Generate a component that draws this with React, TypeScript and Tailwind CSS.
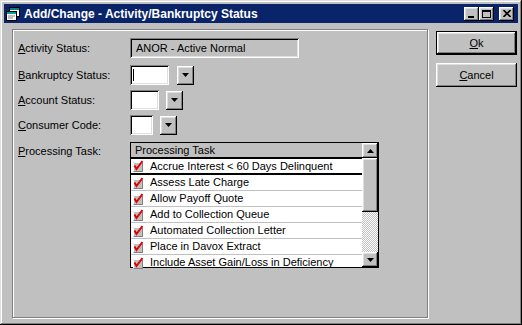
import React from 'react';

// Win95 bevels
const raised =
  'shadow-[inset_-1px_-1px_#000,inset_1px_1px_#fff,inset_-2px_-2px_#808080,inset_2px_2px_#dfdfdf]';
const sunken =
  'shadow-[inset_1px_1px_#808080,inset_-1px_-1px_#fff,inset_2px_2px_#000,inset_-2px_-2px_#dfdfdf]';

const tasks = [
  'Accrue Interest < 60 Days Delinquent',
  'Assess Late Charge',
  'Allow Payoff Quote',
  'Add to Collection Queue',
  'Automated Collection Letter',
  'Place in Davox Extract',
  'Include Asset Gain/Loss in Deficiency',
];

function Arrow({ up = false }: { up?: boolean }) {
  return (
    <svg width="7" height="4" viewBox="0 0 7 4">
      {up ? <path d="M3.5 0 L7 4 L0 4 Z" fill="#000" /> : <path d="M0 0 L7 0 L3.5 4 Z" fill="#000" />}
    </svg>
  );
}

function Check() {
  return (
    <svg width="12" height="12" viewBox="0 0 12 12" className="shrink-0">
      <rect x="1.5" y="2.5" width="9" height="9" fill="#c0c0c0" stroke="#808080" />
      <path d="M1.5 2.5h9M1.5 2.5v9" stroke="#fff" />
      <path d="M2.5 5.5 L4.5 9 L10.5 1" fill="none" stroke="#e00000" strokeWidth="2" />
    </svg>
  );
}

function Combo({ box, gap, caret }: { box: string; gap: string; caret?: boolean }) {
  return (
    <div className="flex items-center">
      <div className={`${box} h-[20px] bg-white ${sunken} flex items-center pl-[3px]`}>
        {caret && <div className="w-px h-[12px] bg-black" />}
      </div>
      <div className={`${gap} w-[17px] h-[19px] bg-[#c0c0c0] ${raised} flex items-center justify-center`}>
        <Arrow />
      </div>
    </div>
  );
}

function Label({ k, rest }: { k: string; rest: string }) {
  return (
    <div className="w-[112px] shrink-0">
      <span className="underline">{k}</span>
      {rest}
    </div>
  );
}

export default function App() {
  return (
    <div className="w-[522px] h-[325px] bg-[#c0c0c0] shadow-[inset_-1px_-1px_#000,inset_1px_1px_#dfdfdf,inset_-2px_-2px_#808080,inset_2px_2px_#fff] flex flex-col font-['Liberation_Sans',Arial,sans-serif] text-[11px] text-black leading-none">
      {/* Заголовок окна */}
      <div className="mt-[4px] mx-[4px] h-[19px] bg-[#0a246a] flex items-center pl-[1px] pr-[4px]">
        <svg width="16" height="16" viewBox="0 0 16 16" className="shrink-0">
          <rect x="4.5" y="1.5" width="10" height="9" fill="#fff" stroke="#000" />
          <rect x="5" y="2" width="9" height="2" fill="#008080" />
          <rect x="1.5" y="5.5" width="10" height="9" fill="#fff" stroke="#000" />
          <rect x="2" y="6" width="9" height="2" fill="#00a0a0" />
          <path d="M3 10h7M3 12h5" stroke="#808080" />
        </svg>
        <div className="ml-[3px] text-white font-bold text-[12px]">
          Add/Change - Activity/Bankruptcy Status
        </div>
        <div className="ml-auto flex items-center">
          <div className={`w-[15px] h-[14px] bg-[#c0c0c0] ${raised} flex items-end justify-center pb-[3px] pr-[2px]`}>
            <div className="w-[6px] h-[2px] bg-black" />
          </div>
          <div className={`w-[15px] h-[14px] bg-[#c0c0c0] ${raised} flex items-center justify-center`}>
            <div className="w-[9px] h-[8px] border border-black border-t-2" />
          </div>
          <div className={`ml-[5px] w-[15px] h-[14px] bg-[#c0c0c0] ${raised} flex items-center justify-center`}>
            <svg width="8" height="7" viewBox="0 0 8 7">
              <path d="M0.5 0 L7.5 7 M7.5 0 L0.5 7" stroke="#000" strokeWidth="1.6" />
            </svg>
          </div>
        </div>
      </div>

      {/* Тело */}
      <div className="flex mt-[6px]">
        <div className="ml-[12px] w-[416px] h-[289px] border border-[#808080] shadow-[1px_1px_#fff,inset_1px_1px_#fff] pl-[5px] pt-[8px]">
          <div className="flex items-center h-[20px]">
            <Label k="A" rest="ctivity Status:" />
            <div className={`w-[169px] h-[20px] ${sunken} bg-[#c0c0c0] flex items-center pl-[6px]`}>
              ANOR - Active Normal
            </div>
          </div>
          <div className="flex items-center h-[20px] mt-[7px]">
            <Label k="B" rest="ankruptcy Status:" />
            <Combo box="w-[39px]" gap="ml-[8px]" caret />
          </div>
          <div className="flex items-center h-[20px] mt-[5px]">
            <Label k="A" rest="ccount Status:" />
            <Combo box="w-[29px]" gap="ml-[7px]" />
          </div>
          <div className="flex items-center h-[20px] mt-[5px]">
            <Label k="C" rest="onsumer Code:" />
            <Combo box="w-[23px]" gap="ml-[7px]" />
          </div>
          <div className="flex mt-[7px]">
            <div className="pt-[4px]">
              <Label k="P" rest="rocessing Task:" />
            </div>
            {/* Список задач */}
            <div className="w-[249px] h-[126px] border border-black flex bg-white">
              <div className="flex-1 flex flex-col">
                <div className="h-[16px] shrink-0 bg-[#c0c0c0] flex items-center pl-[4px] border-b-2 border-black">
                  Processing Task
                </div>
                {tasks.map((t, i) => (
                  <div
                    key={t}
                    className={`h-[16px] shrink-0 flex items-center pl-[1px] border-b ${
                      i === 0 ? 'border-b-2 border-black h-[15px]' : 'border-[#c0c0c0]'
                    }`}
                  >
                    <Check />
                    <span className="ml-[6px] whitespace-nowrap">{t}</span>
                  </div>
                ))}
              </div>
              <div className="w-[16px] flex flex-col">
                <div className={`h-[15px] bg-[#c0c0c0] ${raised} flex items-center justify-center`}>
                  <Arrow up />
                </div>
                <div className={`h-[54px] bg-[#c0c0c0] ${raised}`} />
                <div className="flex-1 bg-[image:repeating-conic-gradient(#c0c0c0_0%_25%,#ffffff_0%_50%)] bg-[length:2px_2px]" />
                <div className={`h-[15px] bg-[#c0c0c0] ${raised} flex items-center justify-center`}>
                  <Arrow />
                </div>
              </div>
            </div>
          </div>
        </div>

        {/* Кнопки */}
        <div className="ml-[8px] mt-[2px] flex flex-col gap-[8px]">
          <div className="w-[81px] h-[24px] border border-black">
            <div className={`w-full h-full ${raised} flex items-center justify-center`}>
              <span className="underline">O</span>k
            </div>
          </div>
          <div className={`w-[81px] h-[24px] ${raised} flex items-center justify-center`}>
            <span className="underline">C</span>ancel
          </div>
        </div>
      </div>
    </div>
  );
}
